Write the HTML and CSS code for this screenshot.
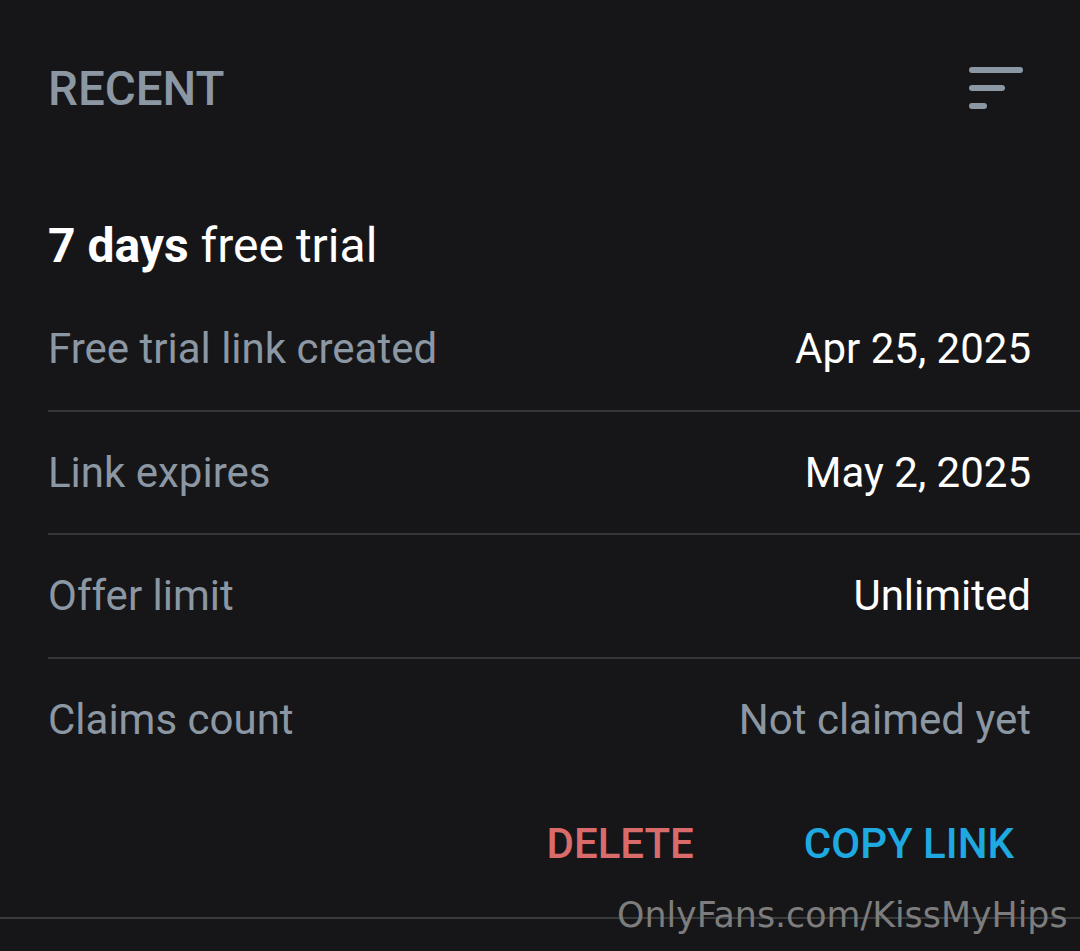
FILE: index.html
```html
<!DOCTYPE html>
<html lang="en">
<head>
<meta charset="utf-8">
<title>Recent</title>
<link rel="stylesheet" href="styles.css">
</head>
<body>
<div class="page">
  <header class="header">
    <h1 class="heading">RECENT</h1>
    <svg class="sort-icon" width="54" height="42" viewBox="0 0 54 42" aria-hidden="true">
      <g stroke="#8c97a4" stroke-width="6" stroke-linecap="round" fill="none">
        <line x1="3" y1="3" x2="51" y2="3"/>
        <line x1="3" y1="21" x2="33" y2="21"/>
        <line x1="3" y1="39" x2="15" y2="39"/>
      </g>
    </svg>
  </header>

  <section class="card">
    <h2 class="title"><b>7 days</b> free trial</h2>
    <div class="rows">
      <div class="row"><span class="label">Free trial link created</span><span class="value">Apr 25, 2025</span></div>
      <div class="row"><span class="label">Link expires</span><span class="value">May 2, 2025</span></div>
      <div class="row"><span class="label">Offer limit</span><span class="value">Unlimited</span></div>
      <div class="row last"><span class="label">Claims count</span><span class="value muted">Not claimed yet</span></div>
    </div>
    <div class="actions">
      <span class="btn delete">DELETE</span>
      <span class="btn copy">COPY LINK</span>
    </div>
  </section>
  <div class="bottom-line"></div>
  <div class="watermark">OnlyFans.com/KissMyHips</div>
</div>
</body>
</html>
```

FILE: styles.css
```css
html, body {
  margin: 0;
  padding: 0;
  background: #161618;
}
body {
  font-family: Roboto, "Liberation Sans", Arial, sans-serif;
  width: 1080px;
  height: 951px;
  overflow: hidden;
}
.page {
  position: relative;
  width: 1080px;
  height: 951px;
}
.header {
  height: 176px;
  display: flex;
  align-items: center;
  justify-content: space-between;
  padding: 2px 57px 0 48px;
  box-sizing: border-box;
}
.heading {
  margin: 0;
  font-size: 47.5px;
  line-height: 54px;
  font-weight: 500;
  color: #8c97a4;
}
.sort-icon {
  display: block;
  margin-top: -2px;
}
.card {
  padding-left: 48px;
}
.title {
  margin: 40px 0 12px 0;
  font-size: 48px;
  line-height: 60px;
  font-weight: 400;
  color: #ffffff;
}
.title b {
  font-weight: 700;
}
.row {
  display: flex;
  justify-content: space-between;
  align-items: baseline;
  padding: 37px 49px 36.5px 0;
  font-size: 42px;
  line-height: 48px;
  border-bottom: 2px solid #353639;
}
.row.last {
  border-bottom: none;
}
.label {
  color: #8c97a4;
}
.value {
  color: #ffffff;
}
.value.muted {
  color: #8c97a4;
}
.actions {
  display: flex;
  justify-content: flex-end;
  gap: 110px;
  padding-right: 66px;
  margin-top: 39px;
  margin-bottom: 48px;
}
.btn {
  font-size: 42px;
  line-height: 50px;
  font-weight: 500;
}
.delete {
  color: #d96b6b;
}
.copy {
  color: #1ea9e1;
}
.bottom-line {
  height: 2px;
  background: #3a3b3d;
}
.watermark {
  position: absolute;
  left: 617px;
  top: 895px;
  font-family: "DejaVu Sans", sans-serif;
  font-size: 34.8px;
  line-height: 40px;
  color: #7d7d7d;
  white-space: nowrap;
}
```
